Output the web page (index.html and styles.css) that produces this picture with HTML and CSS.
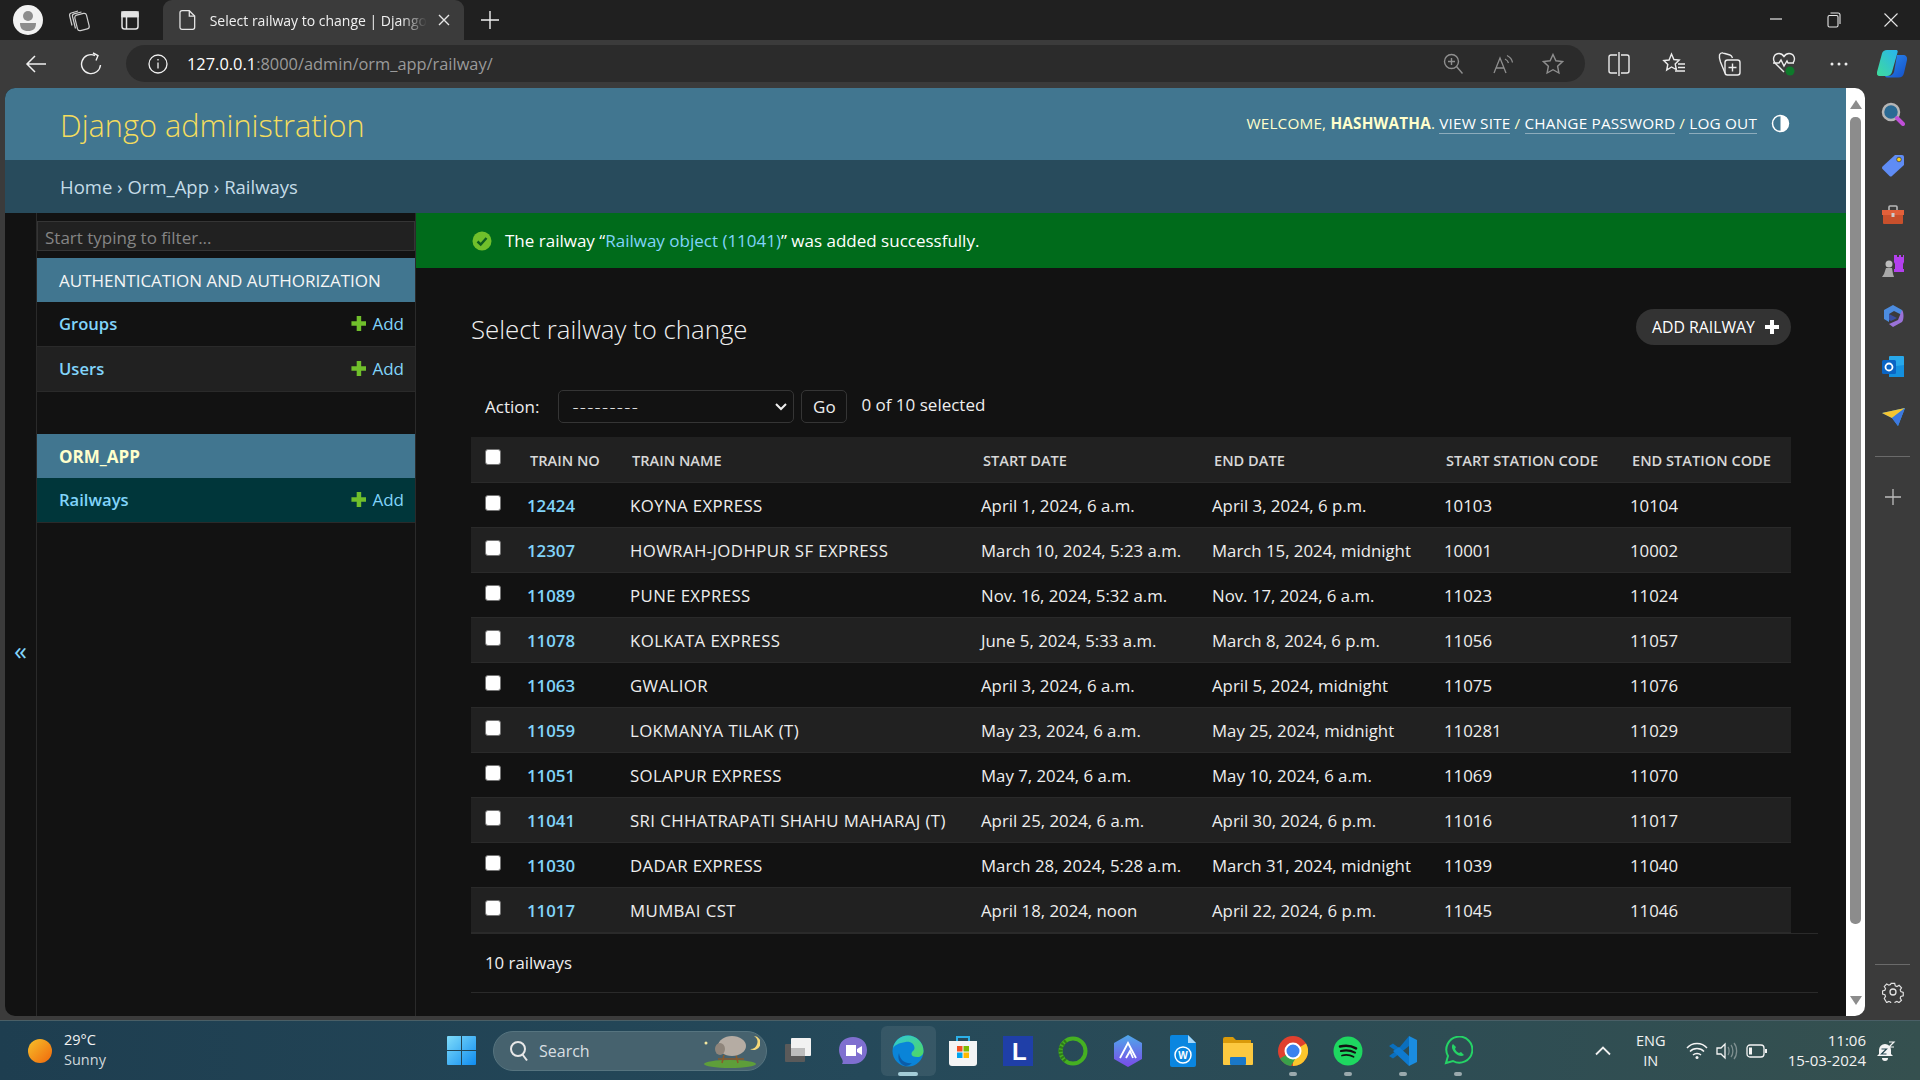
FILE: index.html
```html
<!DOCTYPE html>
<html>
<head>
    <title>Select railway to change | Django site admin</title>
    <link rel="stylesheet" href="styles.css">
</head>
<body>
    <div class="tabstrip">
        <div class="strip-btn first">
            <svg width="30" height="30" viewBox="0 0 30 30"><circle cx="15" cy="15" r="15" fill="#f2f2f2"/><circle cx="15" cy="11" r="5" fill="#8c8c8c"/><path d="M7 18h16c0 6-3 8-8 8s-8-2-8-8z" fill="#8c8c8c"/></svg>
        </div>
        <div class="strip-btn second">
            <svg width="24" height="24" viewBox="0 0 24 24" fill="none" stroke="#cfcfcf" stroke-width="1.200"><rect x="9" y="6" width="12" height="16" rx="2.500" transform="rotate(-14 15 14)"/><path d="M8.500 20.500L5.500 8.500c-.3-1.300.3-2.300 1.500-2.600L14.500 4"/><path d="M5 17.500L2.700 8c-.4-1.500.3-2.600 1.600-3L11 3"/></svg>
        </div>
        <div class="strip-btn">
            <svg width="22" height="22" viewBox="0 0 22 22" fill="none" stroke="#e4e4e4" stroke-width="1.500"><rect x="3" y="3" width="16" height="17" rx="2.500"/><path d="M3 7.500h16M7.500 7.500V20" /><path d="M3 3h16v4.500H3z" fill="#e4e4e4"/></svg>
        </div>
        <div class="tab">
            <svg width="18" height="22" viewBox="0 0 18 22" fill="none" stroke="#e6e6e6" stroke-width="1.300"><path d="M3 1.500h7.500L16 7v11.500a2 2 0 0 1-2 2H3a2 2 0 0 1-2-2v-15a2 2 0 0 1 2-2z"/><path d="M10.500 1.500V7H16"/></svg>
            <span class="tab-title">Select railway to change | Django</span>
            <svg class="tab-close" width="12" height="12" viewBox="0 0 12 12" stroke="#e6e6e6" stroke-width="1.400"><path d="M1 1l10 10M11 1L1 11"/></svg>
        </div>
        <div class="strip-btn">
            <svg width="20" height="20" viewBox="0 0 20 20" stroke="#f0f0f0" stroke-width="1.400"><path d="M10 1v18M1 10h18"/></svg>
        </div>
        <div class="win-controls">
            <div class="win-btn"><svg width="14" height="14" viewBox="0 0 14 14" stroke="#e6e6e6" stroke-width="1.200"><path d="M1 6h12"/></svg></div>
            <div class="win-btn"><svg width="14" height="16" viewBox="0 0 14 16" fill="none" stroke="#e6e6e6" stroke-width="1.100"><rect x="1" y="3.500" width="10" height="11.500" rx="1.500"/><path d="M3.500 1h7.500A2 2 0 0 1 13 3v9"/></svg></div>
            <div class="win-btn"><svg width="14" height="14" viewBox="0 0 14 14" stroke="#e6e6e6" stroke-width="1.100"><path d="M.5.500l13 13M13.500.500l-13 13"/></svg></div>
        </div>
    </div>

    <div class="toolbar">
        <div class="tool-btn"><svg width="22" height="20" viewBox="0 0 22 20" fill="none" stroke="#f0f0f0" stroke-width="1.500"><path d="M21 10H2M10 2l-8 8 8 8"/></svg></div>
        <div class="tool-btn"><svg width="22" height="24" viewBox="0 0 22 24" fill="none" stroke="#f0f0f0" stroke-width="1.400"><path d="M15 3.500A9.500 9.500 0 1 0 20.500 13"/><path d="M13 1l5 2.500-2 5"/></svg></div>
        <div class="addressbar">
            <svg class="info" width="20" height="20" viewBox="0 0 20 20" fill="none" stroke="#f0f0f0" stroke-width="1.300"><circle cx="10" cy="10" r="9"/><path d="M10 8.500v6M10 5v1.600"/></svg>
            <div class="url"><span class="host">127.0.0.1</span>:8000/admin/orm_app/railway/</div>
            <div class="addr-icons">
                <div class="addr-btn"><svg width="20" height="22" viewBox="0 0 20 22" fill="none" stroke="#8f8f8f" stroke-width="1.400"><circle cx="8.500" cy="8.500" r="7"/><path d="M13.500 13.500l6 7M8.500 5v7M5 8.500h7"/></svg></div>
                <div class="addr-btn"><svg width="22" height="22" viewBox="0 0 22 22" fill="none" stroke="#8f8f8f" stroke-width="1.300"><path d="M2 20L8 5l6 15M4 15h8"/><path d="M13 6c2 1 3 2 3.500 4M15 2.500c3 1.500 5 4 5.500 7"/></svg></div>
                <div class="addr-btn"><svg width="22" height="22" viewBox="0 0 22 22" fill="none" stroke="#8f8f8f" stroke-width="1.400"><path d="M11 1.500l2.900 6.300 6.600.8-4.900 4.600 1.300 6.800L11 16.700 5.100 20l1.300-6.800L1.500 8.600l6.600-.8z"/></svg></div>
            </div>
        </div>
        <div class="tool-right">
            <div class="tool-btn"><svg width="22" height="24" viewBox="0 0 22 24" fill="none" stroke="#ececec" stroke-width="1.400"><path d="M9 3H3a2 2 0 0 0-2 2v14a2 2 0 0 0 2 2h6M13 3h6a2 2 0 0 1 2 2v14a2 2 0 0 1-2 2h-6M11 0v24"/></svg></div>
            <div class="tool-btn"><svg width="24" height="24" viewBox="0 0 24 24" fill="none" stroke="#ececec" stroke-width="1.400"><path d="M9.500 2l2.400 5.500 5.300.6-4 3.800 1.100 5.600L9.500 15l-4.800 3 1.100-5.600-4-3.800 5.300-.6z"/><path d="M16 12h7M16 15.500h7M13 19h10"/></svg></div>
            <div class="tool-btn"><svg width="24" height="26" viewBox="0 0 24 26" fill="none" stroke="#ececec" stroke-width="1.400"><path d="M8 22L3.500 11C3 9.500 2 6 2.500 4c.4-1.500 2-2.500 3.500-2l7 2c1 .3 2 1.500 2.500 3"/><rect x="8" y="9" width="15" height="15" rx="2.500"/><path d="M15.500 12.500v8M11.500 16.500h8"/></svg></div>
            <div class="tool-btn"><svg width="26" height="26" viewBox="0 0 26 26"><path d="M13 21L4 12C1 8 3 2.500 8 2.500c2.500 0 4 1.500 5 3 1-1.500 2.500-3 5-3 5 0 7 5.500 4 9.500" fill="none" stroke="#ececec" stroke-width="1.400"/><path d="M2 12h6l2-3 3 6 3-5 1 2h6" fill="none" stroke="#ececec" stroke-width="1.400"/><circle cx="19" cy="20" r="4.500" fill="#0e7a2b"/></svg></div>
            <div class="tool-btn"><svg width="18" height="4" viewBox="0 0 18 4" fill="#ececec"><circle cx="2" cy="2" r="1.500"/><circle cx="9" cy="2" r="1.500"/><circle cx="16" cy="2" r="1.500"/></svg></div>
            <div class="tool-btn last">
                <svg width="31" height="28" viewBox="0 0 31 28"><defs><linearGradient id="cpa" x1="0" y1="1" x2="1" y2="0"><stop offset="0" stop-color="#3fdc9a"/><stop offset="1" stop-color="#28b4f0"/></linearGradient><linearGradient id="cpb" x1="0" y1="0" x2="1" y2="1"><stop offset="0" stop-color="#2c8cf0"/><stop offset="1" stop-color="#1450c8"/></linearGradient></defs><path d="M20 5h6c3 0 4.500 2 4 5l-3 13c-.7 3-2.500 4.500-5.500 4.500H11c-1.500 0-2.500-.5-3-1.500h3c3 0 5-1.500 6-4z" fill="url(#cpb)"/><path d="M10 0h9c1.500 0 2 1 1.500 2.500L15 22c-.8 2.500-2.500 4-5 4H3c-2.500 0-3.500-1.500-3-4L5 3.500C5.600 1.200 7.500 0 10 0z" fill="url(#cpa)"/></svg>
            </div>
        </div>
    </div>

    <div class="window-body">
        <div class="page">
            <div class="page-header">
                <div class="branding">Django administration</div>
                <div class="user-tools">
                    <div class="user-text">Welcome, <strong>Hashwatha</strong>. <a href="#">View site</a> / <a href="#">Change password</a> / <a href="#">Log out</a></div>
                    <svg class="theme-toggle" width="19" height="19" viewBox="0 0 19 19"><circle cx="9.500" cy="9.500" r="8" fill="none" stroke="#fff" stroke-width="1.500"/><path d="M9.500 1.500a8 8 0 0 1 0 16z" fill="#fff"/></svg>
                </div>
            </div>
            <div class="breadcrumbs">Home &rsaquo; Orm_App &rsaquo; Railways</div>
            <div class="main">
                <div class="nav-toggle">&laquo;</div>
                <div class="nav-sidebar">
                    <div class="nav-filter">Start typing to filter...</div>
                    <div class="app-head">Authentication and Authorization</div>
                    <div class="model-row"><a class="model-link" href="#">Groups</a><a class="addlink" href="#">Add</a></div>
                    <div class="model-row alt"><a class="model-link" href="#">Users</a><a class="addlink" href="#">Add</a></div>
                    <div class="app-head current">Orm_App</div>
                    <div class="model-row current"><a class="model-link" href="#">Railways</a><a class="addlink" href="#">Add</a></div>
                </div>
                <div class="content">
                    <div class="message">
                        <svg width="20" height="20" viewBox="0 0 20 20"><circle cx="10" cy="10" r="9.500" fill="#70bf2b"/><path d="M5.500 10.500l3.200 3 5.800-6.500" fill="none" stroke="#0c5c1e" stroke-width="2.400"/></svg>
                        <span>The railway &ldquo;<a href="#">Railway object (11041)</a>&rdquo; was added successfully.</span>
                    </div>
                    <div class="content-inner">
                        <div class="title-row">
                            <h1>Select railway to change</h1>
                            <a class="add-btn" href="#">Add railway
                                <svg width="14" height="14" viewBox="0 0 14 14" fill="#fff"><path d="M5 0h4v5h5v4H9v5H5V9H0V5h5z"/></svg>
                            </a>
                        </div>
                        <div class="actions">
                            <span class="action-label">Action:</span>
                            <div class="select-box"><span class="dashes">---------</span>
                                <svg width="12" height="8" viewBox="0 0 12 8" fill="none" stroke="#eee" stroke-width="2"><path d="M1 1l5 5 5-5"/></svg>
                            </div>
                            <div class="go-btn">Go</div>
                            <span class="counter">0 of 10 selected</span>
                        </div>
                        <table class="results">
                            <colgroup>
                                <col class="c-check"><col class="c-no"><col class="c-name"><col class="c-start"><col class="c-end"><col class="c-scode"><col class="c-ecode">
                            </colgroup>
                            <thead>
                                <tr>
                                    <th class="check"><input type="checkbox"></th>
                                    <th>Train no</th><th>Train name</th><th>Start date</th><th>End date</th><th>Start station code</th><th>End station code</th>
                                </tr>
                            </thead>
                            <tbody>
                                <tr><td class="check"><input type="checkbox"></td><td><a href="#">12424</a></td><td>KOYNA EXPRESS</td><td>April 1, 2024, 6 a.m.</td><td>April 3, 2024, 6 p.m.</td><td>10103</td><td>10104</td></tr>
                                <tr><td class="check"><input type="checkbox"></td><td><a href="#">12307</a></td><td>HOWRAH-JODHPUR SF EXPRESS</td><td>March 10, 2024, 5:23 a.m.</td><td>March 15, 2024, midnight</td><td>10001</td><td>10002</td></tr>
                                <tr><td class="check"><input type="checkbox"></td><td><a href="#">11089</a></td><td>PUNE EXPRESS</td><td>Nov. 16, 2024, 5:32 a.m.</td><td>Nov. 17, 2024, 6 a.m.</td><td>11023</td><td>11024</td></tr>
                                <tr><td class="check"><input type="checkbox"></td><td><a href="#">11078</a></td><td>KOLKATA EXPRESS</td><td>June 5, 2024, 5:33 a.m.</td><td>March 8, 2024, 6 p.m.</td><td>11056</td><td>11057</td></tr>
                                <tr><td class="check"><input type="checkbox"></td><td><a href="#">11063</a></td><td>GWALIOR</td><td>April 3, 2024, 6 a.m.</td><td>April 5, 2024, midnight</td><td>11075</td><td>11076</td></tr>
                                <tr><td class="check"><input type="checkbox"></td><td><a href="#">11059</a></td><td>LOKMANYA TILAK (T)</td><td>May 23, 2024, 6 a.m.</td><td>May 25, 2024, midnight</td><td>110281</td><td>11029</td></tr>
                                <tr><td class="check"><input type="checkbox"></td><td><a href="#">11051</a></td><td>SOLAPUR EXPRESS</td><td>May 7, 2024, 6 a.m.</td><td>May 10, 2024, 6 a.m.</td><td>11069</td><td>11070</td></tr>
                                <tr><td class="check"><input type="checkbox"></td><td><a href="#">11041</a></td><td>SRI CHHATRAPATI SHAHU MAHARAJ (T)</td><td>April 25, 2024, 6 a.m.</td><td>April 30, 2024, 6 p.m.</td><td>11016</td><td>11017</td></tr>
                                <tr><td class="check"><input type="checkbox"></td><td><a href="#">11030</a></td><td>DADAR EXPRESS</td><td>March 28, 2024, 5:28 a.m.</td><td>March 31, 2024, midnight</td><td>11039</td><td>11040</td></tr>
                                <tr><td class="check"><input type="checkbox"></td><td><a href="#">11017</a></td><td>MUMBAI CST</td><td>April 18, 2024, noon</td><td>April 22, 2024, 6 p.m.</td><td>11045</td><td>11046</td></tr>
                            </tbody>
                        </table>
                        <div class="paginator">10 railways</div>
                    </div>
                </div>
            </div>
        </div>
        <div class="scrollbar">
            <svg class="arrow" width="12" height="9" viewBox="0 0 12 9" fill="#8c8c8c"><path d="M6 0l6 9H0z"/></svg>
            <div class="thumb"></div>
            <svg class="arrow" width="12" height="9" viewBox="0 0 12 9" fill="#8c8c8c"><path d="M0 0h12L6 9z"/></svg>
        </div>
        <div class="edge-side">
            <div class="side-icon"><svg width="24" height="24" viewBox="0 0 24 24"><circle cx="10" cy="10" r="8" fill="#2a6a94" stroke="#b5b5b5" stroke-width="2.500"/><path d="M16 16l6 6" stroke="#c04fd8" stroke-width="4" stroke-linecap="round"/></svg></div>
            <div class="side-icon"><svg width="24" height="24" viewBox="0 0 24 24"><path d="M14 2h7a2 2 0 0 1 2 2v8L11 23a2 2 0 0 1-2.500 0l-7-7a2 2 0 0 1 0-2.500z" fill="#5f8cf5"/><circle cx="18" cy="6.500" r="2.300" fill="#f5d020" stroke="#333" stroke-width=".7"/></svg></div>
            <div class="side-icon"><svg width="24" height="20" viewBox="0 0 24 20"><path d="M8 5V2a1 1 0 0 1 1-1h6a1 1 0 0 1 1 1v3" fill="none" stroke="#b8b8b8" stroke-width="1.600"/><path d="M1 5h22v5H1z" fill="#e2603a"/><path d="M2 10h20v8a1 1 0 0 1-1 1H3a1 1 0 0 1-1-1z" fill="#c8502c"/><rect x="10.500" y="8" width="3" height="4" fill="#ccc"/></svg></div>
            <div class="side-icon"><svg width="24" height="24" viewBox="0 0 24 24"><path d="M14 1h2v2h2V1h2v2h2V1h1v7l-1 2v5h1v3H13v-3h1v-5l-1-2V1z" fill="#b340ee"/><circle cx="8" cy="10" r="3.500" fill="#bdbdbd"/><path d="M5 14h6l1 6 1 3H1l2-3z" fill="#a8a8a8"/></svg></div>
            <div class="side-icon"><svg width="22" height="24" viewBox="0 0 22 24"><path d="M11 1l9 5v5l-8-4-5 3v8L2 15V6z" fill="#4c8ce0"/><path d="M20 6c2 2 2 10 0 12l-9 5-4-3 9-4z" fill="#9a72d8"/><path d="M7 10l8 4-6 3-2-1z" fill="#3a4ea0"/></svg></div>
            <div class="side-icon"><svg width="24" height="24" viewBox="0 0 24 24"><rect x="8" y="1" width="15" height="21" rx="1" fill="#28a8ea"/><path d="M8 12l15-2v12H8z" fill="#1490df"/><rect x="1" y="5" width="14" height="14" rx="1.500" fill="#0a64c4"/><circle cx="8" cy="12" r="3.500" fill="none" stroke="#fff" stroke-width="1.800"/></svg></div>
            <div class="side-icon"><svg width="24" height="20" viewBox="0 0 24 20"><path d="M1 6l23-5-7 18-6-8z" fill="#2c9cec"/><path d="M1 6l23-5-13 10z" fill="#f6c531"/><path d="M11 11l13-10-7 18z" fill="#3d78e0"/></svg></div>
            <div class="side-sep"></div>
            <div class="side-icon"><svg width="16" height="16" viewBox="0 0 16 16" stroke="#bdbdbd" stroke-width="1.300"><path d="M8 0v16M0 8h16"/></svg></div>
            <div class="side-spacer"></div>
            <div class="side-sep low"></div>
            <div class="side-icon gear"><svg width="22" height="22" viewBox="0 0 22 22" fill="none" stroke="#e2e2e2" stroke-width="1.300"><path d="M9 1.500h4l.6 2.700 1.900.8 2.400-1.400 2.700 2.900-1.500 2.300.7 1.900 2.700.8v3.800l-2.700.7-.7 1.900 1.400 2.400-2.800 2.600-2.300-1.400-1.900.8-.7 2.600H9l-.6-2.600-1.900-.8-2.400 1.400L1.400 18.400l1.400-2.400-.7-1.900-2.600-.7V10l2.600-.8.7-1.900L1.400 5l2.700-2.900 2.400 1.400 1.900-.8z" transform="translate(1 1) scale(.9)"/><circle cx="11" cy="11" r="3"/></svg></div>
        </div>
    </div>

    <div class="taskbar">
        <div class="weather">
            <svg width="24" height="24" viewBox="0 0 24 24"><defs><linearGradient id="sun" x1="0" y1="0" x2="1" y2="1"><stop offset="0" stop-color="#f7c12a"/><stop offset="1" stop-color="#f0670c"/></linearGradient></defs><circle cx="12" cy="12" r="12" fill="url(#sun)"/></svg>
            <div class="weather-text"><div>29&deg;C</div><div class="sunny">Sunny</div></div>
        </div>
        <div class="task-center">
            <div class="start">
                <svg width="29" height="29" viewBox="0 0 29 29"><defs><linearGradient id="win" x1="0" y1="0" x2="1" y2="1"><stop offset="0" stop-color="#7fdcfa"/><stop offset="1" stop-color="#0f8cf0"/></linearGradient></defs><path d="M1 0h13v14H0V1a1 1 0 0 1 1-1zM15 0h13a1 1 0 0 1 1 1v13H15zM0 15h14v14H1a1 1 0 0 1-1-1zM15 15h14v13a1 1 0 0 1-1 1H15z" fill="url(#win)"/></svg>
            </div>
            <div class="search-pill">
                <svg width="20" height="22" viewBox="0 0 20 22" fill="none" stroke="#e8e8e8" stroke-width="2"><circle cx="9" cy="9" r="7"/><path d="M13.500 14.500l4.500 6"/></svg>
                <span>Search</span>
                <svg class="sheep" width="60" height="36" viewBox="0 0 60 36"><ellipse cx="30" cy="31" rx="26" ry="4" fill="#5e9e3a"/><path d="M24 22l-2 8M36 22l2 8M18 26h26" stroke="#8a5a2a" stroke-width="1.500"/><ellipse cx="32" cy="13" rx="14" ry="10" fill="#b5aca3"/><ellipse cx="20" cy="16" rx="5" ry="6" fill="#8f857b"/><path d="M54 3a7 7 0 1 1-4 13 7 7 0 0 0 4-13z" fill="#f5d778"/><circle cx="6" cy="10" r="1.500" fill="#f5e8a0"/></svg>
            </div>
            <div class="task-apps">
                <div class="app"><svg width="30" height="30" viewBox="0 0 30 30"><rect x="2" y="8" width="20" height="18" rx="1" fill="#5a5a5a"/><rect x="8" y="2" width="20" height="18" rx="1" fill="#f2f2f2"/><rect x="8" y="12" width="14" height="8" fill="#bdbdbd"/></svg></div>
                <div class="app"><svg width="30" height="30" viewBox="0 0 30 30"><path d="M15 1c8 0 14 5 14 13s-6 14-14 14H4c1-1.500 1-3 0-5-2-3-3-6-3-9C1 6 7 1 15 1z" fill="#7f6fd0"/><path d="M8 9h10v11H8zM19 13l5-3v9l-5-3z" fill="#fff"/></svg></div>
                <div class="app active">
                    <svg width="32" height="32" viewBox="0 0 32 32"><defs><linearGradient id="edg" x1="0" y1="0" x2="1" y2="1"><stop offset="0" stop-color="#30c8d8"/><stop offset="1" stop-color="#50d860"/></linearGradient></defs><circle cx="16" cy="16" r="15.500" fill="#0a84d8"/><path d="M1 14C2 6 8 .5 16 .5 24 .5 31.500 7 31.500 16c0 4-3 6-6 6-4 0-6-1-6-3 0-3 3-3 3-6 0-4-4-7-9-6C7 8 2 10 1 14z" fill="url(#edg)"/><path d="M13 31c-5-2-8-7-6-13 1 8 7 11 13 10-2 2-4 3-7 3z" fill="#0c5ca8"/></svg>
                    <span class="indicator wide"></span>
                </div>
                <div class="app"><svg width="30" height="32" viewBox="0 0 30 32"><path d="M9 6V2h12v4" fill="none" stroke="#2cb0e8" stroke-width="2"/><path d="M1 6h28v22a3 3 0 0 1-3 3H4a3 3 0 0 1-3-3z" fill="#f4f4f4"/><rect x="9" y="11" width="5.500" height="5.500" fill="#f25022"/><rect x="15.500" y="11" width="5.500" height="5.500" fill="#7fba00"/><rect x="9" y="17.500" width="5.500" height="5.500" fill="#00a4ef"/><rect x="15.500" y="17.500" width="5.500" height="5.500" fill="#ffb900"/></svg></div>
                <div class="app"><svg width="30" height="30" viewBox="0 0 30 30"><rect width="30" height="30" fill="#1f3fa8"/><text x="9" y="24" font-family="Liberation Sans" font-weight="700" font-size="24" fill="#fff">L</text></svg></div>
                <div class="app"><svg width="30" height="30" viewBox="0 0 30 30" fill="none"><circle cx="15" cy="15" r="12.500" stroke="#45b022" stroke-width="4"/><path d="M8 5C4 8 2.500 12 2.500 15c0 4 2 7 5 10" stroke="#2e7a1a" stroke-width="4" stroke-dasharray="2 1.500"/></svg></div>
                <div class="app"><svg width="28" height="32" viewBox="0 0 28 32"><defs><linearGradient id="arcg" x1="0" y1="0" x2="0" y2="1"><stop offset="0" stop-color="#4fa8ea"/><stop offset="1" stop-color="#7a4ae8"/></linearGradient></defs><path d="M14 0l14 8v16l-14 8-14-8V8z" fill="url(#arcg)"/><path d="M6 23L14 8l8 15M12 23l4-7 3 7" fill="none" stroke="#fff" stroke-width="1.800"/></svg></div>
                <div class="app"><svg width="26" height="32" viewBox="0 0 26 32"><path d="M2 0h16l8 8v22a2 2 0 0 1-2 2H2a2 2 0 0 1-2-2V2a2 2 0 0 1 2-2z" fill="#0a86e0"/><path d="M18 0l8 8h-8z" fill="#a8d8f8"/><circle cx="13" cy="20" r="8" fill="none" stroke="#fff" stroke-width="1.500"/><text x="13" y="24" text-anchor="middle" font-family="Liberation Sans" font-weight="700" font-size="10" fill="#fff">W</text></svg></div>
                <div class="app"><svg width="30" height="30" viewBox="0 0 30 30"><path d="M0 3a2 2 0 0 1 2-2h8l3 3h15v6H0z" fill="#d99a0a"/><path d="M0 7h30v21a1 1 0 0 1-1 1H1a1 1 0 0 1-1-1z" fill="#fcc940"/><rect x="7" y="21" width="16" height="8" rx="1" fill="#1a78c8"/></svg></div>
                <div class="app"><svg width="30" height="30" viewBox="0 0 30 30"><circle cx="15" cy="15" r="15" fill="#e0402e"/><path d="M15 15l13-7.500A15 15 0 0 1 15 30z" fill="#fcc62c"/><path d="M15 15L2 22.500A15 15 0 0 0 13 30l7-12z" fill="#3aa04a"/><circle cx="15" cy="15" r="7.500" fill="#3b82ee" stroke="#fff" stroke-width="2"/></svg><span class="indicator"></span></div>
                <div class="app"><svg width="30" height="30" viewBox="0 0 30 30" fill="none" stroke="#121212" stroke-linecap="round"><circle cx="15" cy="15" r="14.500" fill="#1ed760" stroke="none"/><path d="M7 10.500c6-1.500 11-1 16 1.800" stroke-width="2.600"/><path d="M8 15c5-1.300 9.500-.8 14 1.600" stroke-width="2.200"/><path d="M9 19.500c4-1 8-.6 11.500 1.300" stroke-width="1.800"/></svg><span class="indicator"></span></div>
                <div class="app"><svg width="30" height="30" viewBox="0 0 30 30"><path d="M21 0l8 4v22l-8 4z" fill="#1a8ce0"/><path d="M21 0v10l-10 8-6 4.500L1 20l7-5-7-5 4-2.500 6 4.500z" fill="#0a6fbe"/><path d="M21 20V30L5 15l6-4z" fill="#0e7ad0"/></svg><span class="indicator"></span></div>
                <div class="app"><svg width="30" height="30" viewBox="0 0 30 30" fill="none"><path d="M3 27l2-7A13 13 0 1 1 10 25z" stroke="#25d366" stroke-width="2"/><path d="M10 8c-2 2-1 6 2 9s7 4 9 2l-3-3-2 1c-2-1-3-2-4-4l1-2z" fill="#25d366"/></svg><span class="indicator"></span></div>
            </div>
        </div>
        <div class="tray">
            <svg class="chevron" width="16" height="10" viewBox="0 0 16 10" fill="none" stroke="#f0f0f0" stroke-width="1.800"><path d="M1 8.500l7-7 7 7"/></svg>
            <div class="lang"><div>ENG</div><div>IN</div></div>
            <div class="tray-icons">
                <svg width="22" height="18" viewBox="0 0 22 18" fill="none" stroke="#f4f4f4" stroke-width="1.400"><path d="M1 6c5-6 15-6 20 0M4 9.500c3.500-4 10.500-4 14 0M7 13c2-2 6-2 8 0"/><circle cx="11" cy="15.500" r="1.500" fill="#f4f4f4" stroke="none"/></svg>
                <svg width="22" height="18" viewBox="0 0 22 18" fill="none" stroke="#f4f4f4" stroke-width="1.300"><path d="M1 6h4l4-4v14l-4-4H1z"/><path d="M12 5c1.500 2 1.500 6 0 8M15 3c2.500 3 2.500 9 0 12M18 1c3.500 4 3.500 12 0 16" stroke="#7f8f90"/></svg>
                <svg width="22" height="14" viewBox="0 0 22 14" fill="none" stroke="#f4f4f4" stroke-width="1.300"><rect x="1" y="1" width="17" height="12" rx="3"/><rect x="3" y="3.500" width="3" height="7" fill="#f4f4f4" stroke="none"/><path d="M20 5v4" stroke-width="2"/></svg>
            </div>
            <div class="clock"><div>11:06</div><div>15-03-2024</div></div>
            <svg class="bell" width="20" height="20" viewBox="0 0 20 20"><path d="M9 3a6 6 0 0 1 6 6v4l2 2H1l2-2V9a6 6 0 0 1 6-6z" fill="#f4f4f4"/><path d="M6 17h6a3 3 0 0 1-6 0z" fill="#f4f4f4"/><path d="M5.500 8h5l-5 5h5" fill="none" stroke="#24454f" stroke-width="1.200"/><path d="M13 1h5l-5 5h5" fill="none" stroke="#f4f4f4" stroke-width="1.200"/></svg>
        </div>
    </div>
</body>
</html>
```

FILE: styles.css
```css
* {
    box-sizing: border-box;
}
body {
    margin: 0;
    width: 1920px;
    height: 1080px;
    overflow: hidden;
    background-color: #3b3b3b;
    font-family: "Open Sans", sans-serif;
    color: #eeeeee;
    display: flex;
    flex-direction: column;
}
a {
    text-decoration: none;
}

/* browser chrome */
.tabstrip {
    height: 40px;
    background-color: #202020;
    display: flex;
    align-items: center;
    padding-left: 2px;
}
.strip-btn {
    width: 52px;
    height: 40px;
    display: flex;
    align-items: center;
    justify-content: center;
    flex-shrink: 0;
}
.strip-btn.second {
    width: 50px;
}
.tab {
    width: 301px;
    height: 40px;
    margin-left: 7px;
    padding: 0 14px 0 16px;
    background-color: #3b3b3b;
    border-radius: 9px 9px 0 0;
    display: flex;
    align-items: center;
    gap: 12px;
    flex-shrink: 0;
}
.tab-title {
    width: 222px;
    font-size: 14px;
    margin-left: 1px;
    white-space: nowrap;
    color: #f0f0f0;
    -webkit-mask-image: linear-gradient(to right, #000 88%, transparent);
    mask-image: linear-gradient(to right, #000 88%, transparent);
}
.tab-close {
    flex-shrink: 0;
    margin-left: -1px;
}
.win-controls {
    margin-left: auto;
    display: flex;
}
.win-btn {
    width: 57.500px;
    height: 40px;
    display: flex;
    align-items: center;
    justify-content: center;
}
.toolbar {
    height: 48px;
    padding: 0 0 1px 8px;
    display: flex;
    align-items: center;
    background-color: #3b3b3b;
}
.tool-btn {
    width: 55px;
    height: 37px;
    display: flex;
    align-items: center;
    justify-content: center;
    flex-shrink: 0;
}
.addressbar {
    width: 1459px;
    height: 37px;
    margin-left: 8px;
    padding: 0 7px 0 22px;
    background-color: #2b2b2b;
    border-radius: 19px;
    display: flex;
    align-items: center;
    flex-shrink: 0;
}
.url {
    margin-left: 19px;
    font-size: 16.400px;
    color: #9a9a9a;
    white-space: nowrap;
}
.host {
    color: #ffffff;
}
.addr-icons {
    margin-left: auto;
    display: flex;
}
.addr-btn {
    width: 50px;
    display: flex;
    justify-content: center;
}
.tool-right {
    display: flex;
    margin-left: 6px;
}
.tool-btn.last {
    width: 53px;
}

/* page area */
.window-body {
    height: 928px;
    display: flex;
    padding-left: 5px;
}
.page {
    width: 1841px;
    height: 928px;
    display: flex;
    flex-direction: column;
    overflow: hidden;
    border-radius: 10px 0 0 10px;
    background-color: #121212;
}
.page-header {
    height: 72px;
    padding: 0 56px 0 55px;
    background-color: #417690;
    display: flex;
    align-items: center;
    justify-content: space-between;
}
.branding {
    font-size: 30.700px;
    font-weight: 300;
    color: #f5dd5d;
    margin-top: 2px;
}
.user-tools {
    display: flex;
    align-items: center;
    margin-top: -3px;
}
.user-text {
    font-size: 15.300px;
    letter-spacing: 0.180px;
    color: #ffffcc;
    text-transform: uppercase;
    white-space: nowrap;
}
.user-text strong {
    font-weight: 700;
}
.user-text a {
    color: #ffffff;
    border-bottom: 1px solid rgba(255, 255, 255, 0.4);
}
.theme-toggle {
    margin-left: 14px;
    margin-top: 2px;
}
.breadcrumbs {
    height: 53px;
    padding-left: 55px;
    background-color: #284b5c;
    color: #c4dce8;
    font-size: 18.500px;
    display: flex;
    align-items: center;
}
.main {
    flex: 1;
    display: flex;
    min-height: 0;
}
.nav-toggle {
    width: 32px;
    border-right: 1px solid #2a2a2a;
    color: #81d4fa;
    font-size: 26px;
    display: flex;
    align-items: center;
    justify-content: center;
    padding-top: 71px;
}
.nav-sidebar {
    width: 379px;
    border-right: 1px solid #2a2a2a;
    padding-top: 8px;
    font-size: 17px;
}
.nav-filter {
    height: 30px;
    margin-bottom: 7px;
    padding: 2px 0 0 7px;
    border: 1px solid #353535;
    background-color: #212121;
    color: #858585;
    display: flex;
    align-items: center;
}
.app-head {
    height: 44px;
    padding-left: 22px;
    background-color: #417690;
    color: #f5f5f5;
    text-transform: uppercase;
    display: flex;
    align-items: center;
}
.app-head.current {
    margin-top: 42px;
    color: #ffffcc;
    font-weight: 700;
}
.model-row {
    height: 45px;
    padding: 0 11px 1px 22px;
    border-bottom: 1px solid #2a2a2a;
    display: flex;
    align-items: center;
    justify-content: space-between;
}
.model-row.alt {
    background-color: #212121;
}
.model-row.current {
    background-color: #00363a;
}
.model-link {
    color: #81d4fa;
    font-weight: 600;
    font-size: 16.600px;
}
.addlink {
    color: #81d4fa;
    display: flex;
    align-items: center;
    gap: 6px;
}
.addlink::before {
    content: "";
    width: 15px;
    height: 15px;
    background-color: #70bf2b;
    clip-path: polygon(35% 0, 65% 0, 65% 35%, 100% 35%, 100% 65%, 65% 65%, 65% 100%, 35% 100%, 35% 65%, 0 65%, 0 35%, 35% 35%);
}
.content {
    flex: 1;
    min-width: 0;
}
.message {
    height: 55px;
    padding-left: 56px;
    background-color: #006b1b;
    font-size: 17px;
    color: #ffffff;
    display: flex;
    align-items: center;
    gap: 13px;
}
.message a {
    color: #81d4fa;
}
.content-inner {
    padding: 41px 28px 0 55px;
}
.title-row {
    width: 1320px;
    height: 36px;
    display: flex;
    align-items: center;
    justify-content: space-between;
}
h1 {
    margin: 4px 0 0;
    font-size: 25.800px;
    font-weight: 300;
    color: #f0f0f0;
}
.add-btn {
    width: 155px;
    height: 36px;
    padding-left: 16px;
    border-radius: 18px;
    background-color: #333333;
    color: #ffffff;
    font-size: 15.800px;
    text-transform: uppercase;
    display: flex;
    align-items: center;
    gap: 10px;
}
.actions {
    height: 33px;
    margin-top: 45px;
    padding-left: 14px;
    font-size: 17px;
    display: flex;
    align-items: center;
}
.select-box {
    width: 236px;
    height: 33px;
    margin-left: 19px;
    padding: 0 6px 0 13px;
    border: 1px solid #353535;
    border-radius: 5px;
    display: flex;
    align-items: center;
    justify-content: space-between;
}
.dashes {
    font-size: 19px;
    font-weight: 300;
    letter-spacing: 1.300px;
}
.go-btn {
    width: 46px;
    height: 33px;
    margin-left: 7px;
    border: 1px solid #353535;
    border-radius: 5px;
    display: flex;
    align-items: center;
    justify-content: center;
}
.counter {
    margin: -4px 0 0 14px;
}
.results {
    width: 1320px;
    margin-top: 14px;
    border-collapse: collapse;
    table-layout: fixed;
    font-size: 16.800px;
}
.c-check { width: 49px; }
.c-no { width: 102px; }
.c-name { width: 351px; }
.c-start { width: 231px; }
.c-end { width: 232px; }
.c-scode { width: 186px; }
.c-ecode { width: 169px; }
.results th {
    height: 45px;
    padding: 2px 0 0 10px;
    background-color: #212121;
    border-bottom: 1px solid #2a2a2a;
    font-size: 14.600px;
    font-weight: 600;
    color: #d8d8d8;
    text-align: left;
    text-transform: uppercase;
    white-space: nowrap;
}
.results td {
    height: 45px;
    padding: 1px 0 0 8px;
    border-bottom: 1px solid #2a2a2a;
    white-space: nowrap;
}
.results td:nth-child(3) {
    letter-spacing: 0.400px;
}
.results tbody tr:nth-child(even) td {
    background-color: #212121;
}
.results td a {
    color: #81d4fa;
    font-weight: 600;
    margin-left: -1px;
}
.results th.check, .results td.check {
    padding: 0 0 4px 14px;
}
input[type="checkbox"] {
    appearance: none;
    display: block;
    width: 16px;
    height: 16px;
    margin: 0;
    background-color: #ffffff;
    border: 1px solid #767676;
    border-radius: 3px;
}
.paginator {
    height: 60px;
    padding-left: 14px;
    border-top: 1px solid #2a2a2a;
    border-bottom: 1px solid #2a2a2a;
    font-size: 16.800px;
    display: flex;
    align-items: center;
}

/* scrollbar and edge sidebar */
.scrollbar {
    width: 19px;
    height: 928px;
    padding: 12px 4px 11px;
    background-color: #ffffff;
    border-radius: 0 10px 10px 0;
    display: flex;
    flex-direction: column;
    align-items: center;
}
.arrow {
    flex-shrink: 0;
}
.thumb {
    width: 11px;
    height: 807px;
    margin: 8px 0 auto;
    border-radius: 5px;
    background-color: #8c8c8c;
}
.edge-side {
    width: 55px;
    height: 928px;
    display: flex;
    flex-direction: column;
    align-items: center;
    padding-top: 6px;
}
.side-icon {
    width: 55px;
    height: 40px;
    margin-bottom: 10.500px;
    display: flex;
    align-items: center;
    justify-content: center;
    flex-shrink: 0;
}
.side-sep {
    width: 35px;
    height: 1px;
    flex-shrink: 0;
    margin: 8.500px 0 20px;
    background-color: #6a6a6a;
}
.side-sep.low {
    margin: 0 0 7px;
}
.side-spacer {
    flex: 1;
}
.side-icon.gear {
    margin: 0 0 4px;
}

/* windows taskbar */
.taskbar {
    height: 60px;
    margin-top: 4px;
    border-top: 1px solid #4a5f66;
    background: linear-gradient(to right, #1e3e50, #25495a 45%, #35504f 100%);
    display: flex;
    align-items: center;
    color: #f2f2f2;
    font-size: 14.500px;
}
.weather {
    width: 447px;
    padding-left: 28px;
    display: flex;
    align-items: center;
    gap: 12px;
    flex-shrink: 0;
}
.weather-text {
    line-height: 20px;
    margin-top: -1px;
}
.sunny {
    color: #cfd8dc;
}
.task-center {
    display: flex;
    align-items: center;
}
.start {
    width: 46px;
    display: flex;
}
.search-pill {
    width: 274px;
    height: 40px;
    padding-left: 15px;
    border-radius: 20px;
    border: 1px solid #56747f;
    background-color: #46626e;
    display: flex;
    align-items: center;
    gap: 10px;
    font-size: 16px;
    color: #d8dfe2;
    flex-shrink: 0;
}
.sheep {
    margin-left: auto;
    margin-right: 6px;
}
.task-apps {
    display: flex;
    margin-left: 3.500px;
}
.app {
    width: 55px;
    height: 50px;
    position: relative;
    display: flex;
    align-items: center;
    justify-content: center;
}
.app.active {
    background-color: rgba(255, 255, 255, 0.08);
    border-radius: 6px;
}
.indicator {
    position: absolute;
    left: 23.500px;
    bottom: 0;
    width: 8px;
    height: 4px;
    border-radius: 2px;
    background-color: #9aa9ad;
}
.indicator.wide {
    left: 17.500px;
    width: 20px;
    background-color: #a4cdd8;
}
.tray {
    margin-left: auto;
    padding-right: 24px;
    display: flex;
    align-items: center;
}
.chevron {
    margin-right: 20px;
}
.lang {
    width: 40px;
    text-align: center;
    line-height: 20px;
}
.tray-icons {
    display: flex;
    align-items: center;
    gap: 8px;
    margin-left: 15px;
}
.clock {
    margin-left: 20px;
    margin-top: -1px;
    text-align: right;
    line-height: 20px;
    font-size: 15px;
}
.bell {
    margin-left: 10px;
}
```
